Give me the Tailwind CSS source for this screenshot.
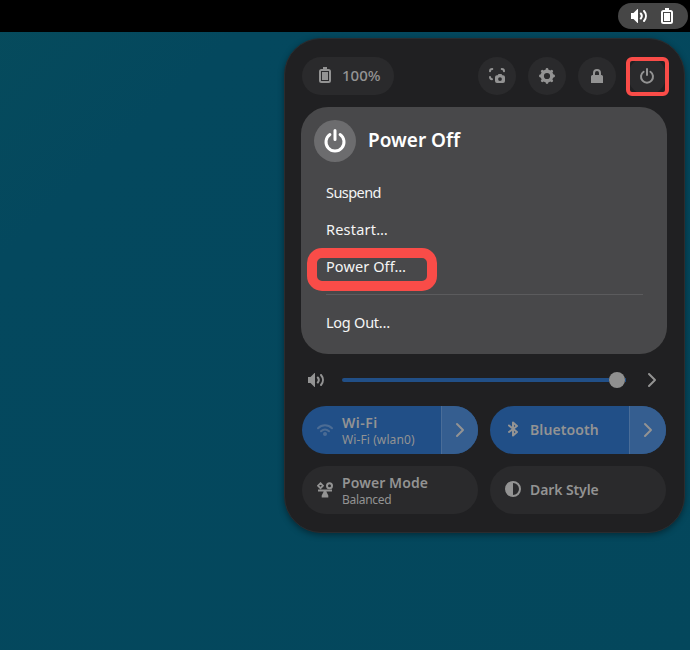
<!DOCTYPE html>
<html lang="en">
<head>
<meta charset="utf-8">
<title>Quick Settings</title>
<script src="https://cdn.jsdelivr.net/npm/@tailwindcss/browser@4"></script>
</head>
<body class="w-[690px] h-[650px] overflow-hidden bg-[#04485d] bg-linear-to-br from-[#064b5c] from-0% via-[#04485e] via-20% to-[#04475c] font-['Noto_Sans',sans-serif] text-[#939393]">
<svg class="hidden">
  <symbol id="volume" viewBox="0 0 16 16"><path fill="currentColor" d="M0 5h2.500l4-4H7v14h-.5l-4-4H0z"/><path fill="none" stroke="currentColor" stroke-width="2" stroke-linecap="round" d="M9.800 5.500c1.300 1.600 1.300 3.400 0 5M13 3c2.600 3 2.600 7 0 10"/></symbol>
  <symbol id="battery" viewBox="0 0 16 16"><path fill="currentColor" fill-rule="evenodd" d="M6 0h4v2h1.500a2.500 2.500 0 0 1 2.500 2.500v9a2.500 2.500 0 0 1-2.500 2.500h-7A2.500 2.500 0 0 1 2 13.500v-9A2.500 2.500 0 0 1 4.500 2H6zM4 4v10h8V4z"/><path fill="currentColor" d="M5 5h6v8H5z"/></symbol>
  <symbol id="power" viewBox="0 0 16 16"><path fill="none" stroke="currentColor" stroke-width="2" stroke-linecap="round" d="M8 1v6M4.600 3.700a6 6 0 1 0 6.800 0"/></symbol>
  <symbol id="chevron" viewBox="0 0 16 16"><path fill="none" stroke="currentColor" stroke-width="2" stroke-linecap="round" stroke-linejoin="round" d="M5 2l6 6-6 6"/></symbol>
</svg>

<header class="h-8 bg-black flex justify-end pt-[3px] pr-[2px]">
  <div class="w-[70px] h-[26px] rounded-full bg-[#464646] text-white flex items-center pl-[13px] gap-3">
    <svg class="size-4"><use href="#volume"/></svg>
    <svg class="size-4"><use href="#battery"/></svg>
  </div>
</header>

<main class="ml-[284px] mt-[6px] w-[401px] h-[495px] rounded-[37px] bg-[#202022] border border-[#2a2c2f] shadow-[0_2px_6px_rgba(0,0,0,0.4)] px-[17px] pt-[18px]">
  <div class="flex h-[38px] w-[364px] gap-3">
    <div class="w-[92px] h-[38px] rounded-full bg-[#2a2a2c] flex items-center pl-[15px] gap-[9px] mr-auto">
      <svg class="size-4 -mt-0.5"><use href="#battery"/></svg>
      <span class="text-[15px] font-medium leading-5 whitespace-nowrap -mt-0.5">100%</span>
    </div>
    <button class="size-[38px] rounded-full bg-[#2a2a2c] grid place-items-center">
      <svg class="size-4" viewBox="0 0 16 16"><path fill="none" stroke="currentColor" stroke-width="2" stroke-linecap="round" d="M1 3.300Q1 1 3.300 1M12.700 1Q15 1 15 3.300M1 9Q1 11 3 11.200"/><path fill="currentColor" fill-rule="evenodd" d="M9.500 6h3l.8 1.300H14a2 2 0 0 1 2 2V13a2 2 0 0 1-2 2H8a2 2 0 0 1-2-2V9.300a2 2 0 0 1 2-2h.7zM11 9.200a1.900 1.900 0 1 0 0 3.800 1.900 1.900 0 0 0 0-3.800z"/></svg>
    </button>
    <button class="size-[38px] rounded-full bg-[#2a2a2c] grid place-items-center">
      <svg class="size-4" viewBox="0 0 16 16"><circle cx="8" cy="8" r="4.800" fill="none" stroke="currentColor" stroke-width="3.400"/><path stroke="currentColor" stroke-width="2.800" stroke-linecap="round" d="M8 1.400v1.500M8 13.100v1.500M1.400 8h1.500M13.100 8h1.500M3.300 3.300l1 1M11.700 11.700l1 1M3.300 12.700l1-1M11.700 4.300l1-1"/></svg>
    </button>
    <button class="size-[38px] rounded-full bg-[#2a2a2c] grid place-items-center">
      <svg class="size-4" viewBox="0 0 16 16"><path fill="none" stroke="currentColor" stroke-width="2" d="M5 8V5a3 3 0 0 1 6 0v3"/><path fill="currentColor" d="M3.500 7h9A1.500 1.500 0 0 1 14 8.500V15H2V8.500A1.500 1.500 0 0 1 3.500 7z"/></svg>
    </button>
    <button class="relative size-[38px] rounded-full bg-[#2a2a2c] grid place-items-center">
      <svg class="size-4"><use href="#power"/></svg>
      <span class="absolute -left-[2px] top-0 w-[43px] h-[39px] rounded-[6px] border-4 border-[#f94c48]"></span>
    </button>
  </div>

  <section class="-ml-px mt-3 w-[366px] h-[247px] rounded-[27px] bg-[#48484a] text-[#f5f5f5] px-[13px] pt-[13px]">
    <div class="flex items-center gap-3 h-[42px]">
      <div class="size-[42px] rounded-full bg-[#6c6c6e] grid place-items-center text-white"><svg class="size-6"><use href="#power"/></svg></div>
      <h2 class="text-[19px] font-semibold text-white leading-6 whitespace-nowrap -mt-0.5">Power Off</h2>
    </div>
    <div class="mt-3 px-3 text-[14.500px]">
      <div class="h-[37px] flex items-center"><span class="tracking-[-0.55px]">Suspend</span></div>
      <div class="h-[37px] flex items-center"><span class="tracking-[0.2px]">Restart…</span></div>
      <div class="relative h-[37px] flex items-center"><span class="tracking-[0.1px]">Power Off…</span>
        <span class="absolute -left-[19px] top-0 w-[130px] h-[43px] rounded-[15px] border-10 border-[#f94c48]"></span>
      </div>
      <div class="mt-[9px] mb-[9px] h-px w-[317px] bg-[#5b5b5d]"></div>
      <div class="h-[37px] flex items-center"><span class="tracking-[-0.25px]">Log Out…</span></div>
    </div>
  </section>

  <div class="h-[52px] w-[364px] flex items-center pl-[6px]">
    <svg class="size-4"><use href="#volume"/></svg>
    <div class="ml-[18px] w-[284px] h-4 flex items-center">
      <div class="h-1 w-[267px] rounded-l-full bg-[#214f87]"></div>
      <div class="size-4 rounded-full bg-[#909090]"></div>
      <div class="h-1 w-px bg-[#214f87]"></div>
    </div>
    <svg class="ml-[18px] size-4"><use href="#chevron"/></svg>
  </div>

  <div class="grid grid-cols-[176px_176px] gap-3">
    <div class="h-12 rounded-full bg-[#214f87] overflow-hidden flex">
      <div class="flex-1 flex items-center pl-[15px] gap-[9px]">
        <svg class="size-4 text-[#4c6c94]" viewBox="0 0 16 16"><path fill="none" stroke="currentColor" stroke-width="2" stroke-linecap="round" d="M1 6.300c4-4 10-4 14 0M4 9.300c2.500-2.300 5.500-2.300 8 0"/><circle cx="8" cy="12" r="2" fill="currentColor"/></svg>
        <div class="whitespace-nowrap pt-0.5"><div class="text-[14px] font-semibold leading-[18px] tracking-[0.5px]">Wi-Fi</div><div class="text-[12px] leading-4 tracking-[0.1px]">Wi-Fi (wlan0)</div></div>
      </div>
      <div class="w-[37px] border-l border-[#4a6d98] bg-[#355e90] grid place-items-center"><svg class="size-4"><use href="#chevron"/></svg></div>
    </div>
    <div class="h-12 rounded-full bg-[#214f87] overflow-hidden flex">
      <div class="flex-1 flex items-center pl-[15px] gap-[9px]">
        <svg class="size-4 -mt-0.5" viewBox="0 0 16 16"><path fill="none" stroke="currentColor" stroke-width="2" stroke-linejoin="round" stroke-linecap="round" d="M4 4.500l8 6.500-4 3.500v-13L12 5l-8 6"/></svg>
        <div class="text-[14px] font-semibold whitespace-nowrap -mt-0.5 tracking-[0.1px]">Bluetooth</div>
      </div>
      <div class="w-[37px] border-l border-[#4a6d98] bg-[#355e90] grid place-items-center"><svg class="size-4"><use href="#chevron"/></svg></div>
    </div>
    <div class="h-12 rounded-full bg-[#2a2a2c] flex items-center pl-[15px] gap-[9px]">
      <svg class="size-4" viewBox="0 0 16 16"><path fill="none" stroke="currentColor" stroke-width="1.700" d="M3.500 1.200l2.500 2.500-2.500 2.500L1 3.700z"/><circle cx="12.500" cy="3.700" r="2.500" fill="none" stroke="currentColor" stroke-width="2"/><path fill="currentColor" d="M1 7.500h14v2H9.300l2 4V15.500H4.700v-2l2-4H1z"/></svg>
      <div class="whitespace-nowrap pt-0.5"><div class="text-[14px] font-semibold leading-[18px] tracking-[0.1px]">Power Mode</div><div class="text-[12px] leading-4 tracking-[-0.3px]">Balanced</div></div>
    </div>
    <div class="h-12 rounded-full bg-[#2a2a2c] flex items-center pl-[15px] gap-[9px]">
      <svg class="size-4 -mt-0.5" viewBox="0 0 16 16"><circle cx="8" cy="8" r="7" fill="none" stroke="currentColor" stroke-width="2"/><path fill="currentColor" d="M8 1v14A7 7 0 0 1 8 1z"/></svg>
      <div class="text-[14px] font-semibold whitespace-nowrap -mt-0.5 tracking-[-0.1px]">Dark Style</div>
    </div>
  </div>
</main>
</body>
</html>
